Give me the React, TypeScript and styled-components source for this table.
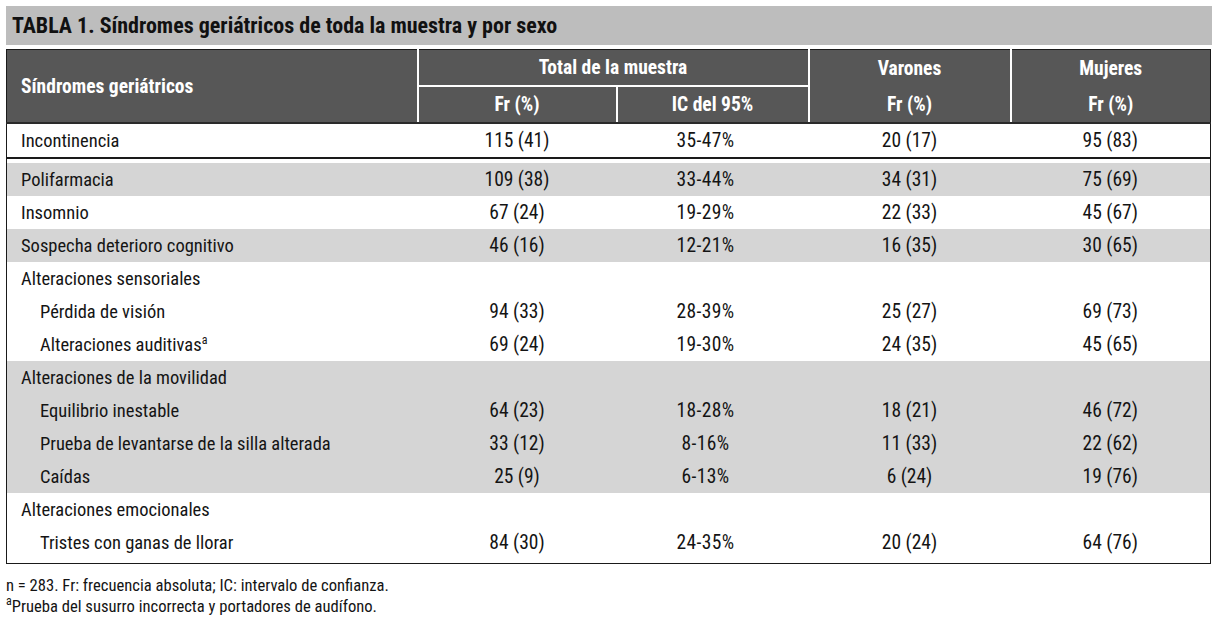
import { FC } from 'react';
import styled, { createGlobalStyle } from 'styled-components';

type Row = {
  label: string;
  note?: string;
  sub?: boolean;
  shaded?: boolean;
  values?: [string, string, string, string];
};

const rows: Row[] = [
  { label: 'Polifarmacia', shaded: true, values: ['109 (38)', '33-44%', '34 (31)', '75 (69)'] },
  { label: 'Insomnio', values: ['67 (24)', '19-29%', '22 (33)', '45 (67)'] },
  { label: 'Sospecha deterioro cognitivo', shaded: true, values: ['46 (16)', '12-21%', '16 (35)', '30 (65)'] },
  { label: 'Alteraciones sensoriales' },
  { label: 'Pérdida de visión', sub: true, values: ['94 (33)', '28-39%', '25 (27)', '69 (73)'] },
  { label: 'Alteraciones auditivas', note: 'a', sub: true, values: ['69 (24)', '19-30%', '24 (35)', '45 (65)'] },
  { label: 'Alteraciones de la movilidad', shaded: true },
  { label: 'Equilibrio inestable', sub: true, shaded: true, values: ['64 (23)', '18-28%', '18 (21)', '46 (72)'] },
  { label: 'Prueba de levantarse de la silla alterada', sub: true, shaded: true, values: ['33 (12)', '8-16%', '11 (33)', '22 (62)'] },
  { label: 'Caídas', sub: true, shaded: true, values: ['25 (9)', '6-13%', '6 (24)', '19 (76)'] },
  { label: 'Alteraciones emocionales' },
  { label: 'Tristes con ganas de llorar', sub: true, values: ['84 (30)', '24-35%', '20 (24)', '64 (76)'] },
];

const GlobalStyle = createGlobalStyle`
  body {
    margin: 0;
    background: #fff;
    font-family: "Roboto Condensed", "Noto Sans Condensed", "Liberation Sans Narrow", "Noto Sans", sans-serif;
    font-stretch: condensed;
    color: #141414;
  }
`;

const Page = styled.div`
  width: 1215px;
  height: 625px;
  padding: 6px 3px 0 6px;
  box-sizing: border-box;
`;

const TitleBar = styled.div`
  height: 39px;
  background: #bdbdbd;
  display: flex;
  align-items: center;
  padding: 0 0 1px 6px;
  box-sizing: border-box;
  font-size: 22px;
  font-weight: bold;
  color: #111;
`;

const Table = styled.table`
  margin-top: 4px;
  width: 1204px;
  border-collapse: collapse;
  table-layout: fixed;
  border: 1px solid #1a1a1a;
`;

const HeadCell = styled.th<{ $divider?: boolean; $rule?: boolean; $left?: boolean; $open?: boolean }>`
  background: #575757;
  color: #fff;
  font-size: 19.5px;
  font-weight: bold;
  text-align: ${(p) => (p.$left ? 'left' : 'center')};
  padding: ${(p) => (p.$left ? '0 0 0 14px' : '0')};
  height: 35px;
  border-left: ${(p) => (p.$divider ? '2px solid #fff' : 'none')};
  border-bottom: ${(p) => (p.$open ? 'none' : p.$rule ? '2px solid #fff' : '2px solid #2a2a2a')};
`;

const BodyRow = styled.tr<{ $shaded?: boolean; $ruled?: boolean }>`
  background: ${(p) => (p.$shaded ? '#d5d5d5' : '#fff')};
  height: ${(p) => (p.$ruled ? '35px' : '33px')};
  & > td {
    border-bottom: ${(p) => (p.$ruled ? '2px solid #1a1a1a' : 'none')};
  }
`;

const Spacer = styled.tr`
  height: 5px;
  background: #fff;
`;

const LabelCell = styled.td<{ $sub?: boolean }>`
  padding: 0 0 0 ${(p) => (p.$sub ? '33px' : '14px')};
  font-size: 18.5px;
  white-space: nowrap;
`;

const ValueCell = styled.td<{ $range?: boolean }>`
  text-align: center;
  font-size: 19.5px;
  padding: ${(p) => (p.$range ? '0 14px 0 0' : '0')};
  letter-spacing: ${(p) => (p.$range ? '0.4px' : '0')};
`;

const Note = styled.sup`
  font-size: 12px;
  vertical-align: 7px;
  line-height: 0;
`;

const LastPad = styled.tr`
  height: 4px;
`;

const Footnotes = styled.div`
  margin-top: 11px;
  font-size: 16.6px;
  line-height: 21px;
`;

const App: FC = () => (
  <>
    <GlobalStyle />
    <Page>
      <TitleBar>TABLA 1. Síndromes geriátricos de toda la muestra y por sexo</TitleBar>
      <Table>
        <colgroup>
          <col style={{ width: 411 }} />
          <col style={{ width: 199 }} />
          <col style={{ width: 192 }} />
          <col style={{ width: 202 }} />
          <col style={{ width: 200 }} />
        </colgroup>
        <thead>
          <tr>
            <HeadCell rowSpan={2} $left>
              Síndromes geriátricos
            </HeadCell>
            <HeadCell colSpan={2} $divider $rule>
              Total de la muestra
            </HeadCell>
            <HeadCell $divider $open>
              Varones
            </HeadCell>
            <HeadCell $divider $open>
              Mujeres
            </HeadCell>
          </tr>
          <tr>
            <HeadCell $divider>Fr (%)</HeadCell>
            <HeadCell $divider>IC del 95%</HeadCell>
            <HeadCell $divider>Fr (%)</HeadCell>
            <HeadCell $divider>Fr (%)</HeadCell>
          </tr>
        </thead>
        <tbody>
          <BodyRow $ruled>
            <LabelCell>Incontinencia</LabelCell>
            <ValueCell>115 (41)</ValueCell>
            <ValueCell $range>35-47%</ValueCell>
            <ValueCell>20 (17)</ValueCell>
            <ValueCell>95 (83)</ValueCell>
          </BodyRow>
          <Spacer>
            <td colSpan={5} />
          </Spacer>
          {rows.map((r) => (
            <BodyRow key={r.label} $shaded={r.shaded}>
              <LabelCell $sub={r.sub}>
                {r.label}
                {r.note && <Note>{r.note}</Note>}
              </LabelCell>
              {(r.values ?? ['', '', '', '']).map((v, i) => (
                <ValueCell key={i} $range={i === 1}>
                  {v}
                </ValueCell>
              ))}
            </BodyRow>
          ))}
          <LastPad>
            <td colSpan={5} />
          </LastPad>
        </tbody>
      </Table>
      <Footnotes>
        <div>n = 283. Fr: frecuencia absoluta; IC: intervalo de confianza.</div>
        <div>
          <Note>a</Note>Prueba del susurro incorrecta y portadores de audífono.
        </div>
      </Footnotes>
    </Page>
  </>
);

export default App;
